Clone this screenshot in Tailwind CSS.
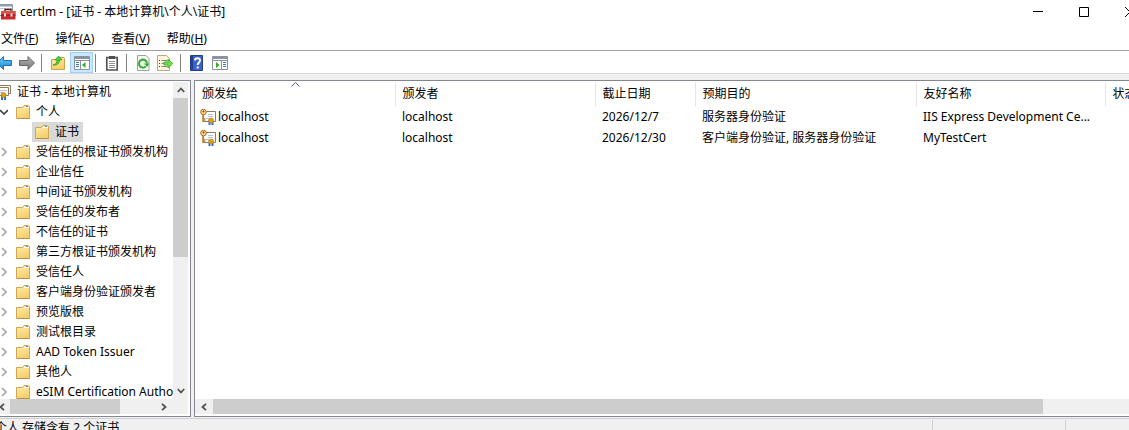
<!DOCTYPE html>
<html lang="zh-CN">
<head>
    <meta charset="UTF-8">
    <meta name="viewport" content="width=device-width, initial-scale=1.0">
    <title>certlm</title>
    <script src="https://cdn.jsdelivr.net/npm/@tailwindcss/browser@4"></script>
</head>
<body class="h-screen overflow-hidden flex flex-col bg-white text-black text-[12px] leading-4 font-['Noto_Sans','Noto_Sans_CJK_SC',sans-serif] whitespace-nowrap">

    <!-- Shared icons -->
    <svg class="absolute w-0 h-0">
        <linearGradient id="folder-fill" x1="0" y1="0" x2="0.4" y2="1">
            <stop offset="0" stop-color="#ffeeb0"/>
            <stop offset="1" stop-color="#f5cf6c"/>
        </linearGradient>
        <linearGradient id="blue-fill" x1="0" y1="0" x2="0" y2="1">
            <stop offset="0" stop-color="#6fd0fa"/>
            <stop offset="1" stop-color="#1583cf"/>
        </linearGradient>
        <linearGradient id="gray-fill" x1="0" y1="0" x2="0" y2="1">
            <stop offset="0" stop-color="#b5b5b5"/>
            <stop offset="1" stop-color="#777777"/>
        </linearGradient>
        <symbol id="folder" viewBox="0 0 14 14">
            <path d="M.5 2.5h6l1.500-2h4.500l1 1v12H.5z" fill="url(#folder-fill)" stroke="#d0a850"/>
            <path d="M8 2.500h5" stroke="#fff"/>
            <path d="M10 1.500h2" stroke="#3f8fe0"/>
            <path d="M1 13.500h12.500" stroke="#b98f45"/>
        </symbol>
        <symbol id="closed" viewBox="0 0 6 10">
            <path d="M1 1l4 4-4 4" fill="none" stroke="#a6a6a6" stroke-width="1.6"/>
        </symbol>
        <symbol id="cert" viewBox="0 0 16 16">
            <path d="M3.500 2.500h12v10h-12z" fill="#fff" stroke="#8c7a60"/>
            <path d="M8 5.500h5M8 7.500h5M6 9.500h3" stroke="#b5bfe0"/>
            <path d="M8.500 12h2v4h-2zM11.500 12h2v4h-2z" fill="#2f6fe0"/>
            <circle cx="11" cy="11.500" r="2.500" fill="#e0a010" stroke="#a87808" stroke-width=".6"/>
            <path d="M3 5v8M3.500 10h2M3.500 12h2" stroke="#c08030" stroke-width="1.500"/>
            <circle cx="3.500" cy="3" r="2.800" fill="#ffd890" stroke="#a86c20"/>
            <circle cx="3.500" cy="2.500" r=".9" fill="#704010"/>
        </symbol>
        <symbol id="arrow-up" viewBox="0 0 8 6">
            <path d="M.8 5L4 1.500 7.200 5" fill="none" stroke="#505050" stroke-width="1.800"/>
        </symbol>
        <symbol id="arrow-down" viewBox="0 0 8 6">
            <path d="M.8 1L4 4.500 7.200 1" fill="none" stroke="#505050" stroke-width="1.800"/>
        </symbol>
        <symbol id="arrow-left" viewBox="0 0 6 8">
            <path d="M5 .8L1.500 4 5 7.200" fill="none" stroke="#505050" stroke-width="1.800"/>
        </symbol>
        <symbol id="arrow-right" viewBox="0 0 6 8">
            <path d="M1 .8L4.500 4 1 7.200" fill="none" stroke="#505050" stroke-width="1.800"/>
        </symbol>
    </svg>

    <!-- Title bar -->
    <header class="h-6 shrink-0 flex items-center">
        <svg class="w-4 h-4 shrink-0" viewBox="0 0 16 16">
            <path d="M0 .500h12.500v11H0" fill="#fff" stroke="#8b98a5"/>
            <path d="M0 1.500h12" stroke="#8fa0b0" stroke-width="2"/>
            <path d="M0 4.500h12" stroke="#b8c4cf"/>
            <path d="M5 7.500V5.500h6v2" fill="none" stroke="#4c2020" stroke-width="1.400"/>
            <path d="M1 7h14.500v8.500H1z" fill="#c92a2a"/>
            <path d="M1 7h14.500v3.500H1z" fill="#e05048"/>
            <path d="M1 11h14.500" stroke="#8a1515"/>
            <path d="M4 9.500h2v3H4zM10.500 9.500h2v3h-2z" fill="#e8e8e8"/>
        </svg>
        <h1 class="pl-1">certlm - [证书 - 本地计算机\个人\证书]</h1>
        <div class="ml-auto -mr-[6px] flex items-center gap-9">
            <button aria-label="最小化">
                <svg class="w-[10px] h-[10px]" viewBox="0 0 10 10"><path d="M0 4.500h10" stroke="#000"/></svg>
            </button>
            <button aria-label="最大化">
                <svg class="w-[10px] h-[10px]" viewBox="0 0 10 10"><path d="M.5.500h9v9h-9z" fill="none" stroke="#000"/></svg>
            </button>
            <button aria-label="关闭">
                <svg class="w-[10px] h-[10px]" viewBox="0 0 10 10"><path d="M0 0l10 10M10 0L0 10" stroke="#000"/></svg>
            </button>
        </div>
    </header>

    <!-- Menu -->
    <nav class="h-[26px] shrink-0 flex items-center gap-[17px] pt-1 pl-px">
        <button>文件(<u>F</u>)</button>
        <button>操作(<u>A</u>)</button>
        <button>查看(<u>V</u>)</button>
        <button>帮助(<u>H</u>)</button>
    </nav>

    <!-- Toolbar -->
    <div class="h-6 shrink-0 flex items-center border-t border-b border-t-[#a0a0a0] border-b-[#d8d8d8] pt-px">
        <button aria-label="后退" class="-ml-1 mr-[3px]">
            <svg class="w-4 h-4" viewBox="0 0 16 16"><path d="M1 8l6.500-6.500v4H15.500v5H7.500v4z" fill="url(#blue-fill)" stroke="#1874b8"/></svg>
        </button>
        <button aria-label="前进" class="ml-1 mr-[5px]">
            <svg class="w-4 h-4" viewBox="0 0 16 16"><path d="M15.500 8L9 1.500v4H.5v5H9v4z" fill="url(#gray-fill)" stroke="#686868"/></svg>
        </button>
        <span class="w-px h-[18px] ml-px bg-[#808080]"></span>
        <button aria-label="上移一级" class="ml-2 mr-1">
            <svg class="w-4 h-4" viewBox="0 0 16 16">
                <path d="M1.500 4.500h7l1.500-2h4l.5 1v11h-13z" fill="url(#folder-fill)" stroke="#c9a24e"/>
                <path d="M3 10C6 9.500 7 7.500 7 5H5l3.500-4L12 5H9.500c0 3.500-2.500 5.500-6.500 5z" fill="#4fd030" stroke="#279a18" stroke-width=".7"/>
            </svg>
        </button>
        <button aria-label="显示/隐藏控制台树" aria-pressed="true" class="h-[21px] w-[23px] shrink-0 flex items-center justify-center bg-[#cce8ff] border border-[#99d1ff]">
            <svg class="w-4 h-4" viewBox="0 0 16 16">
                <path d="M.5 1.500h15v13H.5z" fill="#fff" stroke="#8a929c"/>
                <path d="M1 3h14" stroke="#8793a2" stroke-width="2"/>
                <path d="M1 5.500h14M6.500 6v8" stroke="#8a929c"/>
                <path d="M2 7.500h3M2 9.500h3M2 11.500h3" stroke="#3d7dc8"/>
                <path d="M11.500 7v6l-3.500-3z" fill="#28b020"/>
            </svg>
        </button>
        <span class="w-px h-[18px] ml-[2px] bg-[#808080]"></span>
        <button aria-label="剪贴板" class="ml-2 mr-[6px]">
            <svg class="w-4 h-4" viewBox="0 0 16 16">
                <path d="M2.800 2.500h10.400v12.500H2.800z" fill="#fff" stroke="#505050" stroke-width="1.600"/>
                <path d="M5 1h6v3H5z" fill="#505050"/>
                <path d="M5 6.500h6M5 8.500h6M5 10.500h6M5 12.500h6" stroke="#909090"/>
            </svg>
        </button>
        <span class="w-px h-[18px] bg-[#808080]"></span>
        <button aria-label="刷新" class="ml-2 mr-[6px]">
            <svg class="w-4 h-4" viewBox="0 0 16 16">
                <path d="M2.500.500h8.500l3 3v12H2.500z" fill="#f6f6f6" stroke="#a0a0a0"/>
                <path d="M10.800 11.500a4 4 0 1 1 1.200-3" fill="none" stroke="#30b028" stroke-width="2"/>
                <path d="M9 8.500h5.500L12 12z" fill="#30b028"/>
            </svg>
        </button>
        <button aria-label="导出列表" class="mr-[7px]">
            <svg class="w-4 h-4" viewBox="0 0 16 16">
                <path d="M.5.500h9l3 3v12H.5z" fill="#fdf6dc" stroke="#b8a888"/>
                <path d="M2 5.500h1M2 8.500h1M2 11.500h1" stroke="#404040"/>
                <path d="M4.500 5.500h6M4.500 8.500h4M4.500 11.500h6" stroke="#808070"/>
                <path d="M15.800 8.500l-4.800-4.500v3H7v3h4v3z" fill="#6cdc48" stroke="#3cac28" stroke-width=".8"/>
            </svg>
        </button>
        <span class="w-px h-[18px] bg-[#808080]"></span>
        <button aria-label="帮助" class="ml-2 mr-[7px]">
            <svg class="w-4 h-4" viewBox="0 0 16 16">
                <path d="M1.500.500h12v15h-12z" fill="#3a62cc" stroke="#24408c"/>
                <path d="M2 .500h2v15H2z" fill="#24408c"/>
                <path d="M6 5.500C6 2.500 11 2.500 11 5.500c0 2-2.300 2-2.300 4.500" fill="none" stroke="#fff" stroke-width="1.900"/>
                <path d="M7.700 11.500h2v2h-2z" fill="#fff"/>
            </svg>
        </button>
        <button aria-label="显示/隐藏操作窗格">
            <svg class="w-4 h-4" viewBox="0 0 16 16">
                <path d="M.5 1.500h15v13H.5z" fill="#fff" stroke="#8a929c"/>
                <path d="M1 3h14" stroke="#8793a2" stroke-width="2"/>
                <path d="M1 5.500h14M9.500 6v8" stroke="#8a929c"/>
                <path d="M11 7.500h3M11 9.500h3M11 11.500h3" stroke="#3d7dc8"/>
                <path d="M4 7v6l3.500-3z" fill="#28b020"/>
            </svg>
        </button>
    </div>

    <main class="flex-1 min-h-0 flex gap-[3px] bg-[#f0f0f0] pt-[6px] pb-px">

        <!-- Console tree -->
        <aside class="w-[191px] shrink-0 flex flex-col bg-white border-t border-r border-b border-[#828790] pt-px pr-[2px] pb-[2px]">
            <div class="flex-1 min-h-0 flex">
                <ul class="flex-1 min-w-0 overflow-hidden">
                    <li class="h-5 flex items-center">
                        <svg class="w-4 h-4 -ml-[5px] shrink-0" viewBox="0 0 16 16">
                            <path d="M4.500 1.500h11v8h-11z" fill="#fff" stroke="#8c7a60"/>
                            <path d="M2.500 3.500h11v8h-11z" fill="#fff" stroke="#8c7a60"/>
                            <path d="M4 6.500h8M4 8.500h4" stroke="#b5bfe0"/>
                            <path d="M6 12h2v4H6zM9 12h2v4H9z" fill="#2f6fe0"/>
                            <circle cx="8.500" cy="11" r="2.500" fill="#e0a010" stroke="#a87808" stroke-width=".6"/>
                        </svg>
                        <span class="pl-[6px]">证书 - 本地计算机</span>
                    </li>
                    <li>
                        <div class="h-5 flex items-center">
                            <svg class="w-2 h-[6px] shrink-0 mr-2" viewBox="0 0 8 6"><path d="M0 1l4 4 4-4" fill="none" stroke="#404040" stroke-width="1.600"/></svg>
                            <svg class="w-[14px] h-[14px] shrink-0"><use href="#folder"/></svg>
                            <span class="pl-[6px]">个人</span>
                        </div>
                        <ul>
                            <li class="h-5 flex">
                                <div class="ml-8 flex items-center bg-[#d9d9d9] pl-[3px] pr-1">
                                    <svg class="w-[14px] h-[14px] shrink-0"><use href="#folder"/></svg>
                                    <span class="pl-[6px]">证书</span>
                                </div>
                            </li>
                        </ul>
                    </li>
                    <li class="h-5 flex items-center"><svg class="w-[6px] h-[10px] shrink-0 ml-px mr-[9px]"><use href="#closed"/></svg><svg class="w-[14px] h-[14px] shrink-0"><use href="#folder"/></svg><span class="pl-[6px]">受信任的根证书颁发机构</span></li>
                    <li class="h-5 flex items-center"><svg class="w-[6px] h-[10px] shrink-0 ml-px mr-[9px]"><use href="#closed"/></svg><svg class="w-[14px] h-[14px] shrink-0"><use href="#folder"/></svg><span class="pl-[6px]">企业信任</span></li>
                    <li class="h-5 flex items-center"><svg class="w-[6px] h-[10px] shrink-0 ml-px mr-[9px]"><use href="#closed"/></svg><svg class="w-[14px] h-[14px] shrink-0"><use href="#folder"/></svg><span class="pl-[6px]">中间证书颁发机构</span></li>
                    <li class="h-5 flex items-center"><svg class="w-[6px] h-[10px] shrink-0 ml-px mr-[9px]"><use href="#closed"/></svg><svg class="w-[14px] h-[14px] shrink-0"><use href="#folder"/></svg><span class="pl-[6px]">受信任的发布者</span></li>
                    <li class="h-5 flex items-center"><svg class="w-[6px] h-[10px] shrink-0 ml-px mr-[9px]"><use href="#closed"/></svg><svg class="w-[14px] h-[14px] shrink-0"><use href="#folder"/></svg><span class="pl-[6px]">不信任的证书</span></li>
                    <li class="h-5 flex items-center"><svg class="w-[6px] h-[10px] shrink-0 ml-px mr-[9px]"><use href="#closed"/></svg><svg class="w-[14px] h-[14px] shrink-0"><use href="#folder"/></svg><span class="pl-[6px]">第三方根证书颁发机构</span></li>
                    <li class="h-5 flex items-center"><svg class="w-[6px] h-[10px] shrink-0 ml-px mr-[9px]"><use href="#closed"/></svg><svg class="w-[14px] h-[14px] shrink-0"><use href="#folder"/></svg><span class="pl-[6px]">受信任人</span></li>
                    <li class="h-5 flex items-center"><svg class="w-[6px] h-[10px] shrink-0 ml-px mr-[9px]"><use href="#closed"/></svg><svg class="w-[14px] h-[14px] shrink-0"><use href="#folder"/></svg><span class="pl-[6px]">客户端身份验证颁发者</span></li>
                    <li class="h-5 flex items-center"><svg class="w-[6px] h-[10px] shrink-0 ml-px mr-[9px]"><use href="#closed"/></svg><svg class="w-[14px] h-[14px] shrink-0"><use href="#folder"/></svg><span class="pl-[6px]">预览版根</span></li>
                    <li class="h-5 flex items-center"><svg class="w-[6px] h-[10px] shrink-0 ml-px mr-[9px]"><use href="#closed"/></svg><svg class="w-[14px] h-[14px] shrink-0"><use href="#folder"/></svg><span class="pl-[6px]">测试根目录</span></li>
                    <li class="h-5 flex items-center"><svg class="w-[6px] h-[10px] shrink-0 ml-px mr-[9px]"><use href="#closed"/></svg><svg class="w-[14px] h-[14px] shrink-0"><use href="#folder"/></svg><span class="pl-[6px]">AAD Token Issuer</span></li>
                    <li class="h-5 flex items-center"><svg class="w-[6px] h-[10px] shrink-0 ml-px mr-[9px]"><use href="#closed"/></svg><svg class="w-[14px] h-[14px] shrink-0"><use href="#folder"/></svg><span class="pl-[6px]">其他人</span></li>
                    <li class="h-5 flex items-center"><svg class="w-[6px] h-[10px] shrink-0 ml-px mr-[9px]"><use href="#closed"/></svg><svg class="w-[14px] h-[14px] shrink-0"><use href="#folder"/></svg><span class="pl-[6px]">eSIM Certification Authorities</span></li>
                </ul>
                <div class="w-[15px] shrink-0 flex flex-col bg-[#f0f0f0]">
                    <button aria-label="向上滚动" class="h-4 flex items-center justify-center"><svg class="w-2 h-[6px]"><use href="#arrow-up"/></svg></button>
                    <div class="h-1/2 bg-[#cdcdcd]"></div>
                    <button aria-label="向下滚动" class="h-4 mt-auto flex items-center justify-center"><svg class="w-2 h-[6px]"><use href="#arrow-down"/></svg></button>
                </div>
            </div>
            <div class="h-[15px] shrink-0 flex bg-[#f0f0f0]">
                <button aria-label="向左滚动" class="w-[10px] flex items-center"><svg class="w-[6px] h-2 -ml-px"><use href="#arrow-left"/></svg></button>
                <div class="w-[110px] bg-[#cdcdcd]"></div>
                <button aria-label="向右滚动" class="ml-auto mr-4 w-4 flex items-center justify-center"><svg class="w-[6px] h-2"><use href="#arrow-right"/></svg></button>
            </div>
        </aside>

        <!-- Certificate list -->
        <section class="flex-1 min-w-0 flex flex-col bg-white border-t border-l border-b border-[#828790] pt-px pb-[2px]">
            <div class="flex-1 min-h-0 overflow-hidden">
                <table class="w-full table-fixed text-left">
                    <thead>
                        <tr class="h-6 *:font-normal">
                            <th class="w-[200px] pl-[7px] border-r border-[#e5e5e5] relative">颁发给
                                <svg class="absolute top-0 left-1/2 -ml-1 w-[9px] h-[5px]" viewBox="0 0 9 5"><path d="M.5 4.500l4-4 4 4" fill="none" stroke="#606060"/></svg>
                            </th>
                            <th class="w-[200px] pl-[7px] border-r border-[#e5e5e5]">颁发者</th>
                            <th class="w-[100px] pl-[7px] border-r border-[#e5e5e5]">截止日期</th>
                            <th class="w-[221px] pl-[7px] border-r border-[#e5e5e5]">预期目的</th>
                            <th class="w-[189px] pl-[7px] border-r border-[#e5e5e5]">友好名称</th>
                            <th class="pl-[7px] overflow-hidden">状态</th>
                        </tr>
                    </thead>
                    <tbody>
                        <tr class="h-[21px]">
                            <td class="pl-[5px]"><div class="flex items-center gap-[2px]"><svg class="w-4 h-4 shrink-0"><use href="#cert"/></svg>localhost</div></td>
                            <td class="pl-[7px]">localhost</td>
                            <td class="pl-[7px]">2026/12/7</td>
                            <td class="pl-[7px]">服务器身份验证</td>
                            <td class="pl-[7px]">IIS Express Development Ce...</td>
                            <td></td>
                        </tr>
                        <tr class="h-[21px]">
                            <td class="pl-[5px]"><div class="flex items-center gap-[2px]"><svg class="w-4 h-4 shrink-0"><use href="#cert"/></svg>localhost</div></td>
                            <td class="pl-[7px]">localhost</td>
                            <td class="pl-[7px]">2026/12/30</td>
                            <td class="pl-[7px]">客户端身份验证, 服务器身份验证</td>
                            <td class="pl-[7px]">MyTestCert</td>
                            <td></td>
                        </tr>
                    </tbody>
                </table>
            </div>
            <div class="h-[15px] shrink-0 flex bg-[#f0f0f0]">
                <button aria-label="向左滚动" class="w-[18px] flex items-center justify-center"><svg class="w-[6px] h-2"><use href="#arrow-left"/></svg></button>
                <div class="flex-1 mr-[86px] bg-[#cdcdcd]"></div>
            </div>
        </section>
    </main>

    <!-- Status bar -->
    <footer class="h-3 shrink-0 flex overflow-hidden bg-[#f0f0f0] border-t border-[#d0d0d0]">
        <p class="flex-1 -ml-[5px] pt-px">个人 存储含有 2 个证书</p>
        <div class="mt-px w-[133px] border-l border-[#d0d0d0]"></div>
        <div class="mt-px w-16 border-l border-[#d0d0d0]"></div>
    </footer>
</body>
</html>
